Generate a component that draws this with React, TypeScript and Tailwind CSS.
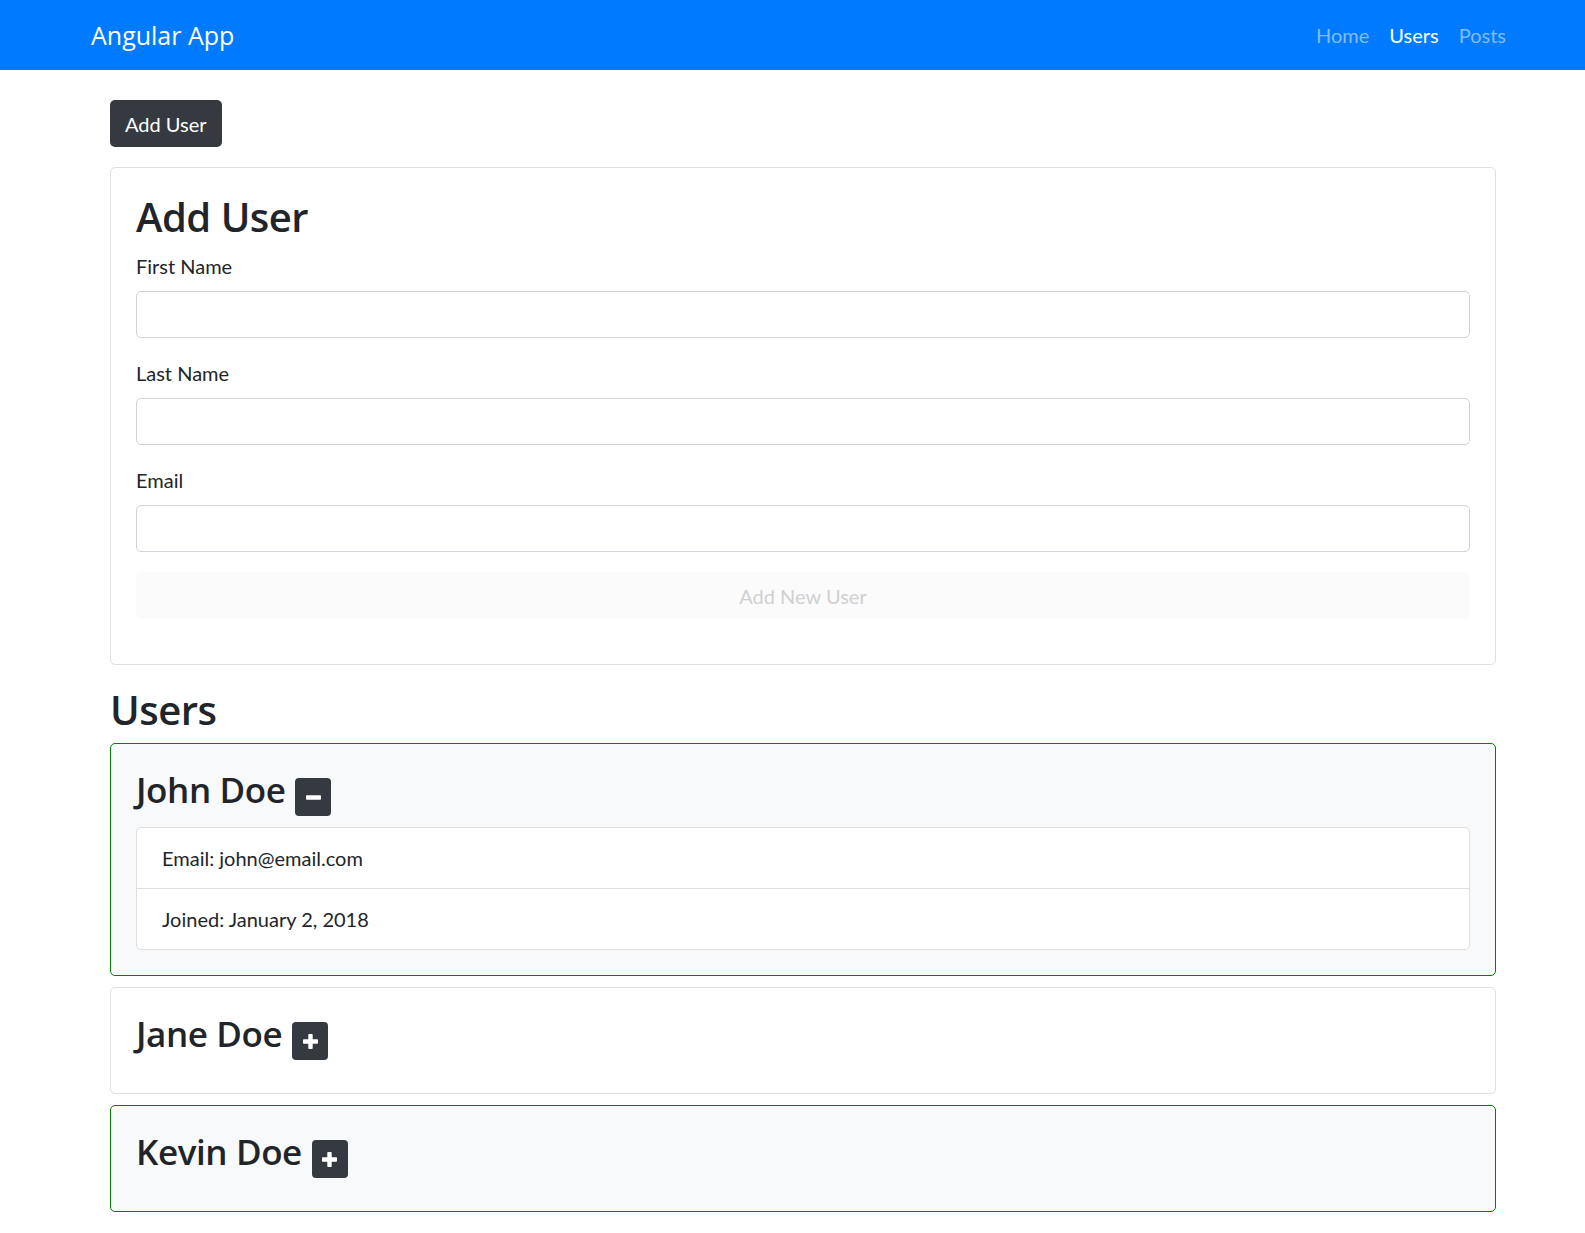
import React from "react";

const body = { fontFamily: "Lato, 'Noto Sans', sans-serif" };
const head = { fontFamily: "'Open Sans', 'Noto Sans', sans-serif" };

function MinusIcon() {
  return (
    <svg width="15" height="15" viewBox="0 0 15 15" aria-hidden="true">
      <rect x="0" y="5.3" width="15" height="4.4" rx="0.8" fill="#fff" />
    </svg>
  );
}

function PlusIcon() {
  return (
    <svg width="15" height="15" viewBox="0 0 15 15" aria-hidden="true">
      <rect x="0" y="5.3" width="15" height="4.4" rx="0.8" fill="#fff" />
      <rect x="5.3" y="0" width="4.4" height="15" rx="0.8" fill="#fff" />
    </svg>
  );
}

function Field({ label }: { label: string }) {
  return (
    <div className="mb-[20px]">
      <label className="block text-[20px] leading-[30px] mb-[10px] text-[#212529]" style={body}>
        {label}
      </label>
      <input
        type="text"
        className="block w-full h-[47px] border border-[#ced4da] rounded-[5px] bg-white px-[15px] text-[20px] outline-none"
        style={body}
      />
    </div>
  );
}

function UserCard({
  name,
  open,
  highlight,
  email,
  joined,
}: {
  name: string;
  open: boolean;
  highlight: boolean;
  email?: string;
  joined?: string;
}) {
  return (
    <div
      className={
        highlight
          ? "mb-[11px] rounded-[5px] border border-[#008000] bg-[#f8f9fa] p-[25px]"
          : "mb-[11px] rounded-[5px] border border-[#dfdfdf] bg-white p-[25px]"
      }
    >
      <div className={open ? "flex items-start mb-[11px]" : "flex items-start mb-[8px]"}>
        <h3
          className="text-[35px] leading-[42px] font-semibold tracking-[-0.4px] text-[#212529]"
          style={head}
        >
          {name}
        </h3>
        <button className="ml-[10px] mt-[9px] w-[36px] h-[38px] rounded-[4px] bg-[#343a40] flex items-center justify-center">
          {open ? <MinusIcon /> : <PlusIcon />}
        </button>
      </div>
      {open && (
        <ul
          className="bg-white border border-[#dfdfdf] rounded-[5px] text-[20px] leading-[30px] text-[#212529]"
          style={body}
        >
          <li className="px-[25px] py-[15px]">Email: {email}</li>
          <li className="px-[25px] py-[15px] border-t border-[#dfdfdf]">Joined: {joined}</li>
        </ul>
      )}
    </div>
  );
}

export default function App() {
  return (
    <div className="min-h-screen bg-white text-[#212529]" style={body}>
      <nav className="h-[70px] bg-[#007bff] flex items-center justify-between pl-[91px] pr-[69px]">
        <a className="text-[25px] leading-[38px] text-white" style={head}>
          Angular App
        </a>
        <ul className="flex text-[20px] leading-[30px]" style={body}>
          <li className="px-[10px] text-[#80bdff]">Home</li>
          <li className="px-[10px] text-white">Users</li>
          <li className="px-[10px] text-[#80bdff]">Posts</li>
        </ul>
      </nav>

      <main className="ml-[110px] w-[1386px] pt-[30px] pb-[20px]">
        <button
          className="h-[47px] px-[15px] rounded-[5px] bg-[#343a40] text-white text-[20px] leading-[30px]"
          style={body}
        >
          Add User
        </button>

        <div className="mt-[20px] border border-[#dfdfdf] rounded-[5px] p-[25px]">
          <h2
            className="text-[40px] leading-[48px] font-semibold tracking-[-0.5px] mb-[10px]"
            style={head}
          >
            Add User
          </h2>
          <Field label="First Name" />
          <Field label="Last Name" />
          <Field label="Email" />
          <button
            disabled
            className="mb-[20px] w-full h-[47px] rounded-[5px] bg-[#fbfbfc] text-[#cfd0d1] text-[20px] leading-[30px]"
            style={body}
          >
            Add New User
          </button>
        </div>

        <h2
          className="mt-[21px] mb-[9px] text-[40px] leading-[48px] font-semibold tracking-[-0.5px]"
          style={head}
        >
          Users
        </h2>

        <UserCard name="John Doe" open highlight email="john@email.com" joined="January 2, 2018" />
        <UserCard name="Jane Doe" open={false} highlight={false} />
        <UserCard name="Kevin Doe" open={false} highlight />
      </main>
    </div>
  );
}
